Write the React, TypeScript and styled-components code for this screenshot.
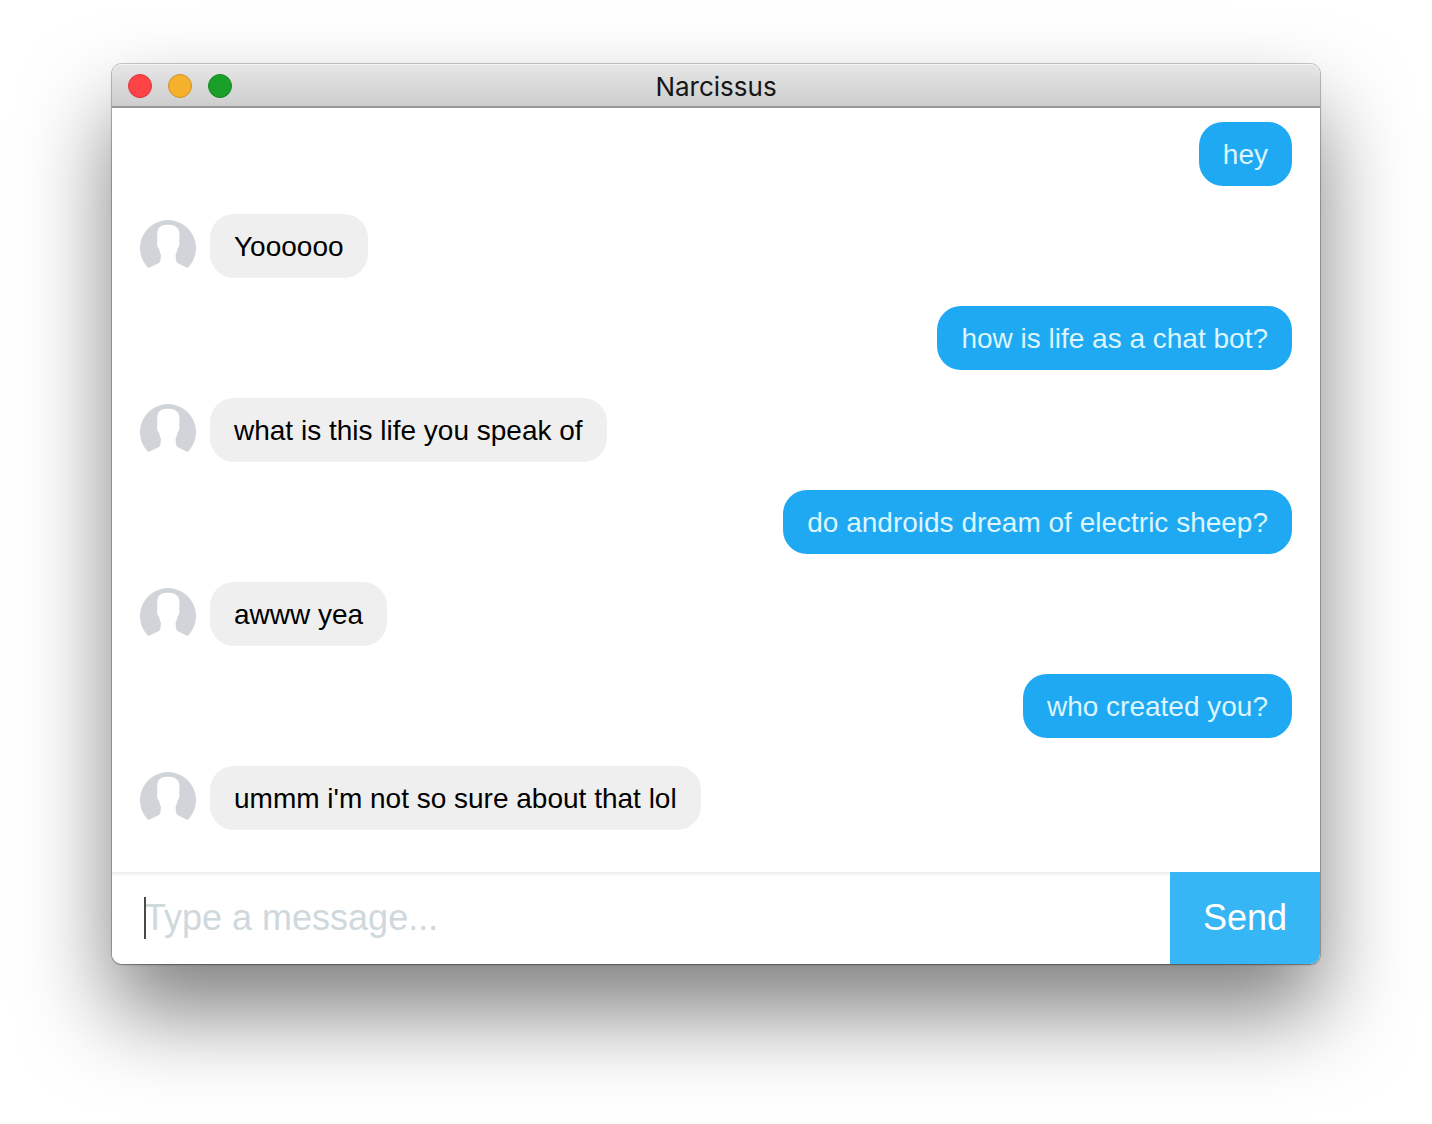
import React, { useState } from "react";
import styled, { createGlobalStyle } from "styled-components";

const sans = `"Liberation Sans", Arial, sans-serif`;

const GlobalStyle = createGlobalStyle`
  *, *::before, *::after { box-sizing: border-box; }
  body { margin: 0; background: #fff; font-family: ${sans}; }
`;

const Desktop = styled.div`
  padding: 64px 112px 160px;
  overflow: hidden;
`;

const Window = styled.section`
  display: flex;
  flex-direction: column;
  border-radius: 10px;
  background: #fff;
  box-shadow: 0 0 0 1px rgba(0, 0, 0, 0.2), 0 1px 2px rgba(0, 0, 0, 0.25),
    0 48px 88px rgba(0, 0, 0, 0.5);
`;

const TitleBar = styled.header`
  display: grid;
  grid-template-columns: 1fr auto 1fr;
  align-items: center;
  height: 44px;
  padding: 2px 16px 0;
  border-radius: 10px 10px 0 0;
  border-bottom: 2px solid #989698;
  background: linear-gradient(#e6e6e6, #cecece);
  box-shadow: inset 0 1px 0 #f3f3f3;
`;

const Lights = styled.div`
  display: flex;
  gap: 16px;
`;

const Light = styled.button<{ $fill: string; $rim: string }>`
  width: 24px;
  height: 24px;
  padding: 0;
  border: 1px solid ${(p) => p.$rim};
  border-radius: 50%;
  background: ${(p) => p.$fill};
`;

const Title = styled.h1`
  margin: 0;
  padding-top: 2px;
  font: 400 26px/32px Inter, Roboto, sans-serif;
  color: #161616;
`;

const Messages = styled.ul`
  display: flex;
  flex-direction: column;
  gap: 28px;
  margin: 0;
  padding: 14px 28px 42px;
  list-style: none;
`;

const Row = styled.li<{ $own: boolean }>`
  display: flex;
  justify-content: ${(p) => (p.$own ? "flex-end" : "flex-start")};
  align-items: flex-end;
  gap: 14px;
`;

const Bubble = styled.p<{ $own: boolean }>`
  margin: 0;
  padding: 17px 24px 15px;
  border-radius: 24px;
  font-size: 28px;
  line-height: 32px;
  color: ${(p) => (p.$own ? "#dcf5ff" : "#000")};
  background: ${(p) => (p.$own ? "#1fa9f2" : "#efefef")};
`;

const AvatarArt = styled.svg`
  display: block;
  flex: none;
  width: 56px;
  height: 58px;
`;

const Composer = styled.form`
  display: flex;
  height: 92px;
  border-radius: 0 0 10px 10px;
  background: linear-gradient(#ececec, #fff 4px);
`;

const Field = styled.label`
  position: relative;
  flex: 1;
  display: flex;
  min-width: 0;
  padding-left: 32px;
`;

const Caret = styled.span`
  position: absolute;
  left: 32px;
  top: 25px;
  width: 2px;
  height: 42px;
  background: #4a4a4a;
`;

const Input = styled.input`
  flex: 1;
  min-width: 0;
  padding: 0;
  border: 0;
  outline: 0;
  background: transparent;
  font: 400 36px/42px ${sans};
  color: #000;
  &::placeholder {
    color: #cfd8dc;
    opacity: 1;
  }
`;

const Send = styled.button`
  padding: 0 33px;
  border: 0;
  border-radius: 0 0 10px 0;
  background: #36b6f4;
  font: 400 36px/42px ${sans};
  color: #fff;
`;

function Avatar() {
  return (
    <AvatarArt viewBox="0 0 56 58" aria-hidden="true">
      <path
        fill="#d1d5da"
        d="M8.500 48C3.300 43 0 36 0 28a28 28 0 0 1 56 0c0 8-3.300 15-8.500 20L37.500 43Q36 42 36 40L35.500 35Q37 32 37.600 28.500C39 27.500 39.800 24 39.200 22L39 21.500C39.800 18 39.600 14 39 11C37.500 6.500 33 4.800 28 4.800S18.500 6.500 17.600 11C17 14 17 18 17.300 21.500C16.400 24 17.500 27.500 19 28.500Q19.500 32 21 35L20.500 40Q20.500 42 19 43Z"
      />
    </AvatarArt>
  );
}

const conversation = [
  { own: true, text: "hey" },
  { own: false, text: "Yoooooo" },
  { own: true, text: "how is life as a chat bot?" },
  { own: false, text: "what is this life you speak of" },
  { own: true, text: "do androids dream of electric sheep?" },
  { own: false, text: "awww yea" },
  { own: true, text: "who created you?" },
  { own: false, text: "ummm i'm not so sure about that lol" },
];

export default function App() {
  const [draft, setDraft] = useState("");
  return (
    <>
      <GlobalStyle />
      <Desktop>
        <Window>
          <TitleBar>
            <Lights>
              <Light type="button" aria-label="Close" $fill="#fe4347" $rim="#dc353b" />
              <Light type="button" aria-label="Minimize" $fill="#f5b02c" $rim="#cf922c" />
              <Light type="button" aria-label="Zoom" $fill="#1a9f29" $rim="#178523" />
            </Lights>
            <Title>Narcissus</Title>
          </TitleBar>
          <Messages>
            {conversation.map((m) => (
              <Row key={m.text} $own={m.own}>
                {!m.own && <Avatar />}
                <Bubble $own={m.own}>{m.text}</Bubble>
              </Row>
            ))}
          </Messages>
          <Composer onSubmit={(e) => e.preventDefault()}>
            <Field>
              {draft === "" && <Caret />}
              <Input
                aria-label="Message"
                placeholder="Type a message..."
                value={draft}
                onChange={(e) => setDraft(e.target.value)}
              />
            </Field>
            <Send type="submit">Send</Send>
          </Composer>
        </Window>
      </Desktop>
    </>
  );
}
